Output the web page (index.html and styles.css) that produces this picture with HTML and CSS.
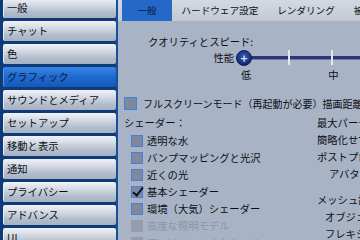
FILE: index.html
```html
<!DOCTYPE html>
<html lang="ja">
<head>
  <meta charset="UTF-8" />
  <title>環境設定 - グラフィック</title>
  <link rel="stylesheet" href="styles.css">
</head>
<body>
  <div class="sidebar">
    <div class="nav">
      <div class="nav-item">一般</div>
      <div class="nav-item">チャット</div>
      <div class="nav-item">色</div>
      <div class="nav-item active">グラフィック</div>
      <div class="nav-item">サウンドとメディア</div>
      <div class="nav-item">セットアップ</div>
      <div class="nav-item">移動と表示</div>
      <div class="nav-item">通知</div>
      <div class="nav-item">プライバシー</div>
      <div class="nav-item">アドバンス</div>
      <div class="nav-item">UI</div>
    </div>
  </div>

  <div class="main">
    <div class="tabs">
      <div class="tab active">一般</div>
      <div class="tab">ハードウェア設定</div>
      <div class="tab">レンダリング</div>
      <div class="tab">被写界深度</div>
    </div>

    <div class="panel">
      <div class="quality-label">クオリティとスピード:</div>
      <div class="slider-row">
        <span class="slider-name">性能</span>
        <div class="slider">
          <div class="track"></div>
          <span class="tick tick-1"></span>
          <span class="tick tick-2"></span>
          <span class="knob">+</span>
        </div>
      </div>
      <div class="slider-labels"><span>低</span><span>中</span></div>

      <div class="check full">
        <span class="box"></span>
        <span>フルスクリーンモード（再起動が必要）描画距離</span>
      </div>

      <div class="columns">
        <div class="col-left">
          <div class="heading">シェーダー：</div>
          <div class="check"><span class="box"></span><span>透明な水</span></div>
          <div class="check"><span class="box"></span><span>バンプマッピングと光沢</span></div>
          <div class="check"><span class="box"></span><span>近くの光</span></div>
          <div class="check"><span class="box checked"></span><span>基本シェーダー</span></div>
          <div class="check"><span class="box"></span><span>環境（大気）シェーダー</span></div>
          <div class="check disabled"><span class="box"></span><span>高度な照明モデル</span></div>
          <div class="check disabled"><span class="box"></span><span>アンビエントオクルージョン</span></div>
        </div>
        <div class="col-right">
          <div class="opt">最大パーティクル数</div>
          <div class="opt">簡略化せずに描画</div>
          <div class="opt">ポストプロセス品質</div>
          <div class="opt sub">アバターの物理演算</div>
          <div class="opt group">メッシュ詳細</div>
          <div class="opt sub2">オブジェクト</div>
          <div class="opt sub2">フレキシプリム</div>
        </div>
      </div>
    </div>
  </div>
</body>
</html>
```

FILE: styles.css
```css
body {
  margin: 0;
  width: 360px;
  height: 240px;
  overflow: hidden;
  display: flex;
  font-family: "Noto Sans CJK JP", "Noto Sans", sans-serif;
  font-size: 10.3px;
  color: #0c0f16;
  background: #a8b4c6;
}

.sidebar {
  width: 116px;
  flex-shrink: 0;
  background: #0f3a78;
  border-right: 2px solid #1a4f9a;
  overflow: hidden;
}

.nav {
  margin-top: -2px;
  display: flex;
  flex-direction: column;
  gap: 3px;
  padding-left: 3px;
}

.nav-item {
  height: 20px;
  line-height: 20px;
  padding-left: 3px;
  border-radius: 2px;
  background: linear-gradient(#f0f3f7 0%, #d4dae3 35%, #b3bdcc 70%, #a6b1c3 100%);
  border-left: 1px solid #e8edf3;
  white-space: nowrap;
}

.nav-item.active {
  background: linear-gradient(#3a86e6 0%, #1f6bd2 45%, #1559b8 100%);
  border-left-color: #4f95e8;
  color: #0b1a3c;
}

.main {
  flex-grow: 1;
  min-width: 0;
  overflow: hidden;
  white-space: nowrap;
}

.tabs {
  height: 21px;
  display: flex;
  padding-left: 4px;
  background: linear-gradient(#d3d9e1, #c3cad5);
}

.tab {
  flex-shrink: 0;
  font-size: 9.6px;
  line-height: 21px;
  padding: 0 9.5px;
}

.tab.active {
  width: 50px;
  padding: 0;
  text-align: center;
  background: #2569c8;
  color: #0b1a3c;
}

.panel {
  padding: 15px 0 0 6px;
}

.quality-label {
  line-height: 12px;
  padding-left: 24px;
}

.slider-row {
  display: flex;
  height: 14px;
  margin-top: 3px;
  line-height: 14px;
}

.slider-name {
  width: 110px;
  padding-right: 3px;
  text-align: right;
}

.slider {
  position: relative;
  flex-grow: 1;
}

.track {
  position: absolute;
  left: 7px;
  right: -10px;
  top: 5px;
  height: 3px;
  background: #27357a;
  border-bottom: 1px solid #6b78a8;
}

.tick {
  position: absolute;
  top: -1px;
  width: 2px;
  height: 15px;
  background: #e2e6ee;
}

.tick-1 { left: 51px; }
.tick-2 { left: 94px; }

.knob {
  position: absolute;
  left: -1px;
  top: -1px;
  width: 14px;
  height: 14px;
  border-radius: 50%;
  background: radial-gradient(circle at 50% 40%, #3d5cb8, #142a72 70%);
  border: 1px solid #0c1a4c;
  color: #cfdaf5;
  font-size: 12px;
  font-weight: bold;
  line-height: 14px;
  text-align: center;
}

.slider-labels {
  display: flex;
  gap: 77px;
  margin-top: 4px;
  padding-left: 117px;
  line-height: 12px;
}

.check {
  display: flex;
  align-items: center;
  height: 17px;
  gap: 4px;
  padding-left: 7px;
}

.box {
  width: 10px;
  height: 10px;
  flex-shrink: 0;
  background: #7f889d;
  border: 1px solid #3f80e0;
  position: relative;
}

.box.checked::after {
  content: "";
  position: absolute;
  left: 3px;
  top: -2px;
  width: 4px;
  height: 9px;
  border: solid #10141c;
  border-width: 0 2px 2px 0;
  transform: rotate(38deg);
}

.check.full {
  height: 13px;
  margin-top: 16px;
  padding-left: 0;
  gap: 6px;
  font-size: 10px;
}

.check.full .box {
  width: 11px;
  height: 11px;
}

.check.disabled {
  color: #8a94a8;
}

.check.disabled .box {
  background: #949db0;
  border-color: #949db0;
}

.columns {
  display: grid;
  grid-template-columns: 193px 1fr;
  margin-top: 4px;
}

.heading {
  height: 18px;
  line-height: 18px;
}

.opt {
  height: 17px;
  line-height: 17px;
}

.opt.sub { padding-left: 12px; }
.opt.sub2 { padding-left: 8px; }
.opt.group { margin-top: 9px; }
```
